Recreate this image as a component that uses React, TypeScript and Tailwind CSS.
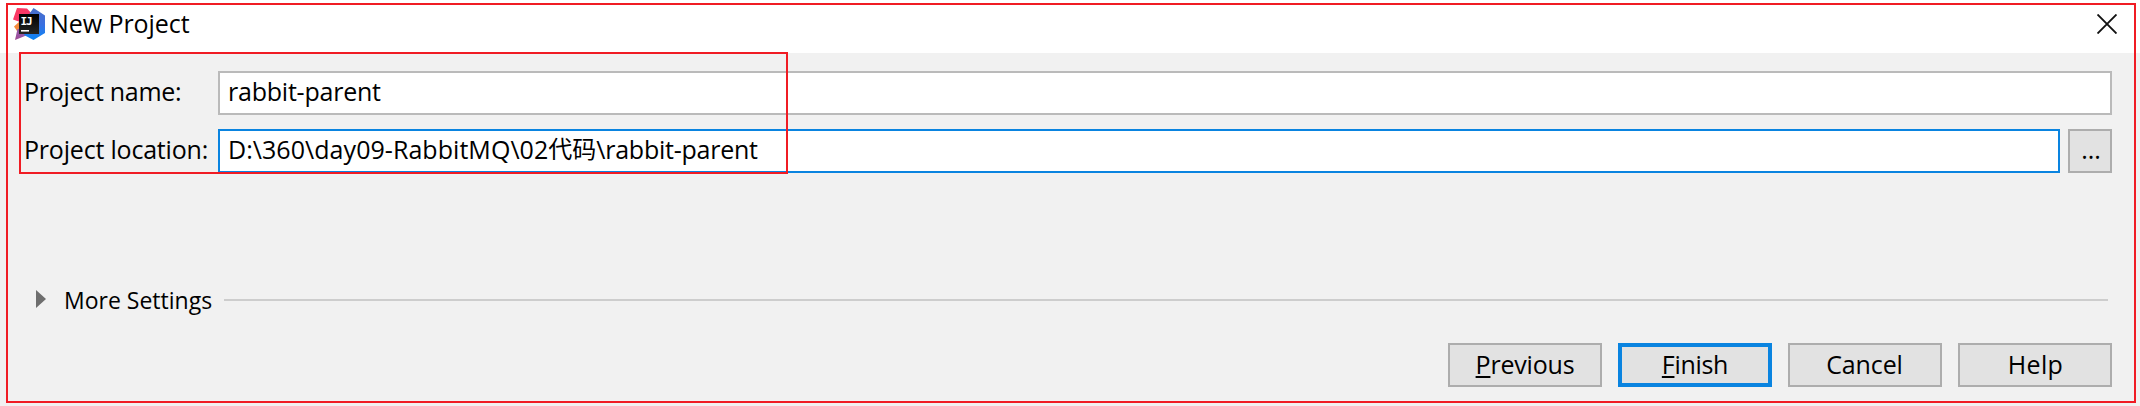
import type { ReactNode } from "react";

function IdeaLogo() {
  return (
    <svg width="32" height="32" viewBox="0 0 32 32" className="block shrink-0">
      <defs>
        <linearGradient id="pink" x1="0" y1="0" x2="1" y2="1">
          <stop offset="0" stopColor="#fb3a5c" />
          <stop offset="0.6" stopColor="#f8366c" />
          <stop offset="1" stopColor="#b557a5" />
        </linearGradient>
        <linearGradient id="blue" x1="0" y1="0" x2="0" y2="1">
          <stop offset="0" stopColor="#4a6fc8" />
          <stop offset="0.5" stopColor="#3b6fe0" />
          <stop offset="1" stopColor="#0a86f8" />
        </linearGradient>
        <linearGradient id="violet" x1="0" y1="1" x2="1" y2="0">
          <stop offset="0" stopColor="#a04a92" />
          <stop offset="1" stopColor="#8a63c0" />
        </linearGradient>
        <linearGradient id="tile" x1="0" y1="0" x2="0" y2="1">
          <stop offset="0" stopColor="#000000" />
          <stop offset="1" stopColor="#262626" />
        </linearGradient>
      </defs>
      <polygon points="1,18.5 7,13 12,17 7,24 4,23" fill="#f58a3c" />
      <polygon points="2,32 4.5,21 16,20 17,26" fill="url(#violet)" />
      <polygon points="4,0 14,0.5 20,7 14,18 7,14 0,11.5" fill="url(#pink)" />
      <polygon points="20.5,0 32,7.5 32,25 20.5,32 11,27 18,14 15.5,7" fill="url(#blue)" />
      <rect x="6" y="6" width="20" height="20" fill="url(#tile)" />
      <g fill="#fff" fontSize="11" fontWeight="700" fontFamily="'DejaVu Sans Mono', monospace">
        <text x="7.4" y="17.4">I</text>
        <text x="13" y="17.4">J</text>
      </g>
      <rect x="8" y="22" width="8" height="1.6" fill="#fff" />
    </svg>
  );
}

function DialogButton({ className, children }: { className: string; children: ReactNode }) {
  return (
    <button className={`flex h-11 w-[154px] items-center justify-center bg-[#e2e2e2] pb-[3px] ${className}`}>
      <span>{children}</span>
    </button>
  );
}

function Mnemonic({ children }: { children: ReactNode }) {
  return <span className="underline decoration-2 underline-offset-2 [text-decoration-skip-ink:none]">{children}</span>;
}

export default function App() {
  return (
    <div className="relative flex h-[406px] w-[2140px] flex-col overflow-hidden whitespace-nowrap bg-[#f1f1f1] font-['Open_Sans','Noto_Sans_CJK_SC',sans-serif] text-[25px] leading-[34px] text-black">
      <header className="flex h-[53px] items-start justify-between bg-white pl-[13px] pr-[23px]">
        <div className="flex items-start">
          <div className="pt-2">
            <IdeaLogo />
          </div>
          <h1 className="pl-[5px] pt-[6px] tracking-[-0.06px]">New Project</h1>
        </div>
        <svg width="20" height="20" viewBox="0 0 20 20" className="mt-[14px] block">
          <path d="M0.5 0.5 L19.5 19.5 M19.5 0.5 L0.5 19.5" stroke="#111" strokeWidth="1.9" />
        </svg>
      </header>

      <main className="flex flex-col gap-[14px] pl-6 pr-7 pt-[18px]">
        <div className="flex h-11 items-stretch">
          <label className="w-[194px] pt-[3px] tracking-[-0.28px]">Project name:</label>
          <div className="flex flex-1 items-center border-2 border-[#bababa] bg-white pb-1 pl-2 tracking-[-0.22px]">
            rabbit-parent
          </div>
        </div>
        <div className="flex h-11 items-stretch">
          <label className="w-[194px] pt-[3px] tracking-[-0.2px]">Project location:</label>
          <div className="flex flex-1 items-center border-2 border-[#0a84e0] bg-white pb-1 pl-2">
            <span className="tracking-[0.05px]">D:\360\day09-RabbitMQ\02</span>
            <span className="text-[24px]">代码</span>
            <span className="tracking-[-0.24px]">\rabbit-parent</span>
          </div>
          <button className="ml-2 flex w-11 items-center justify-center border-2 border-[#adadad] bg-[#e2e2e2] pb-1 pl-[2px]">
            ...
          </button>
        </div>
      </main>

      <section className="mt-[110px] flex h-[34px] items-center pl-9 pr-8">
        <svg width="10" height="18" viewBox="0 0 10 18" className="mt-[-2px] block">
          <polygon points="0,0 10,9 0,18" fill="#6e6e6e" />
        </svg>
        <span className="w-[178px] pl-[18px] text-[23px]">More Settings</span>
        <div className="h-[2px] flex-1 bg-[#cdcdcd]" />
      </section>

      <footer className="mt-[26px] flex justify-end gap-4 pr-7">
        <DialogButton className="border-2 border-[#adadad] tracking-[-0.2px]">
          <Mnemonic>P</Mnemonic>revious
        </DialogButton>
        <DialogButton className="border-4 border-[#0a84e0] tracking-[-0.3px]">
          <Mnemonic>F</Mnemonic>inish
        </DialogButton>
        <DialogButton className="border-2 border-[#adadad] pr-[1px] tracking-[-0.1px]">Cancel</DialogButton>
        <DialogButton className="border-2 border-[#adadad] pl-[1px] tracking-[0.3px]">Help</DialogButton>
      </footer>

      <div className="pointer-events-none absolute left-[6px] top-[3px] h-[400px] w-[2130px] border-2 border-[#f01c24]" />
      <div className="pointer-events-none absolute left-[19px] top-[52px] h-[122px] w-[769px] border-2 border-[#f01c24]" />
    </div>
  );
}
